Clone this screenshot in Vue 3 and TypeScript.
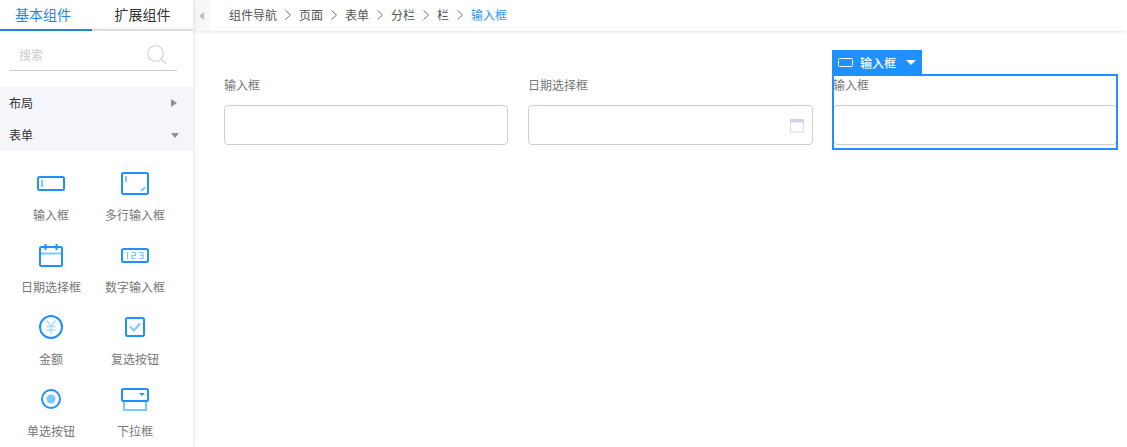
<script setup lang="ts">
const crumbs: string[] = ['组件导航', '页面', '表单', '分栏', '栏']
const items: { label: string; icon: string }[] = [
  { label: '输入框', icon: 'input' },
  { label: '多行输入框', icon: 'textarea' },
  { label: '日期选择框', icon: 'date' },
  { label: '数字输入框', icon: 'number' },
  { label: '金额', icon: 'money' },
  { label: '复选按钮', icon: 'check' },
  { label: '单选按钮', icon: 'radio' },
  { label: '下拉框', icon: 'select' },
]
</script>

<template>
  <div class="app">
    <aside class="side">
      <div class="tabs">
        <div class="tab on">基本组件</div>
        <div class="tab">扩展组件</div>
      </div>
      <div class="search">
        <span class="ph">搜索</span>
        <svg width="22" height="22" viewBox="0 0 22 22" fill="none" stroke="#cfcfcf" stroke-width="1.1">
          <circle cx="9.5" cy="9.5" r="7.8" />
          <path d="M15 15l5.5 5" />
        </svg>
      </div>
      <div class="group">
        <span>布局</span><i class="tri right"></i>
      </div>
      <div class="group">
        <span>表单</span><i class="tri down"></i>
      </div>
      <div class="grid">
        <div v-for="it in items" :key="it.label" class="item">
          <div class="ic">
            <svg width="30" height="30" viewBox="0 0 30 30" fill="none">
              <template v-if="it.icon === 'input'">
                <rect x="2" y="7" width="26" height="13" rx="1.5" stroke="#1e90ff" stroke-width="2" />
                <path d="M6 10v7" stroke="#7cc8ff" stroke-width="2" />
              </template>
              <template v-else-if="it.icon === 'textarea'">
                <rect x="2" y="3" width="26" height="21" rx="1.5" stroke="#1e90ff" stroke-width="2" />
                <path d="M6 6v6" stroke="#7cc8ff" stroke-width="2" />
                <path d="M21 21l4-3.500" stroke="#7cc8ff" stroke-width="2" />
              </template>
              <template v-else-if="it.icon === 'date'">
                <rect x="4" y="5" width="22" height="19" rx="1.500" stroke="#1e90ff" stroke-width="2" />
                <path d="M5 11.500h20" stroke="#7cc8ff" stroke-width="2" />
                <path d="M9.500 2v6M20.500 2v6" stroke="#1e90ff" stroke-width="2" />
              </template>
              <template v-else-if="it.icon === 'number'">
                <rect x="2" y="7" width="26" height="13" rx="1.500" stroke="#1e90ff" stroke-width="2" />
                <path d="M7.500 10v7M12 10.500h3.500V13.500H12V16.500h3.500M19 10.500h4v6h-4M20 13.500h3" stroke="#7cc8ff" stroke-width="1.200" />
              </template>
              <template v-else-if="it.icon === 'money'">
                <circle cx="15" cy="13" r="11" stroke="#1e90ff" stroke-width="2" />
                <path d="M10.500 6.500L15 12l4.500-5.500M15 12v8M10.500 12.500h9M10.500 16h9" stroke="#a6dcff" stroke-width="1.400" />
              </template>
              <template v-else-if="it.icon === 'check'">
                <rect x="6" y="4" width="18" height="18" rx="1.500" stroke="#1e90ff" stroke-width="2" />
                <path d="M10 12.500l4 4 6-7" stroke="#7cc8ff" stroke-width="2" />
              </template>
              <template v-else-if="it.icon === 'radio'">
                <circle cx="15" cy="13" r="9" stroke="#1e90ff" stroke-width="2" />
                <circle cx="15" cy="13" r="4.500" fill="#7cc8ff" />
              </template>
              <template v-else>
                <path d="M4 14v10h22V14" stroke="#7cc8ff" stroke-width="2" />
                <rect x="2" y="3" width="26" height="12" rx="1.500" stroke="#1e90ff" stroke-width="2" />
                <path d="M19 7h6l-3 3z" fill="#1e90ff" />
              </template>
            </svg>
          </div>
          <div class="lb">{{ it.label }}</div>
        </div>
      </div>
    </aside>
    <main class="main">
      <header class="top">
        <div class="toggle"><i class="tri left"></i></div>
        <nav class="crumbs">
          <template v-for="c in crumbs" :key="c">
            <span>{{ c }}</span>
            <svg class="sep" width="6" height="10" viewBox="0 0 6 10" fill="none" stroke="#777" stroke-width="1">
              <path d="M.5 .5L5.500 5 .5 9.500" />
            </svg>
          </template>
          <span class="cur">输入框</span>
        </nav>
      </header>
      <section class="form">
        <div class="col">
          <label>输入框</label>
          <div class="field"></div>
        </div>
        <div class="col">
          <label>日期选择框</label>
          <div class="field date">
            <svg width="14" height="15" viewBox="0 0 14 15" fill="none">
              <rect x=".5" y="2.500" width="13" height="11.500" stroke="#d3dcea" />
              <rect x="0" y="1" width="14" height="3.500" fill="#cbd5e5" />
            </svg>
          </div>
        </div>
        <div class="col sel">
          <div class="bar">
            <svg width="15" height="9" viewBox="0 0 15 9" fill="none" stroke="#fff" stroke-width="1">
              <rect x=".5" y=".5" width="14" height="8" rx="1" />
            </svg>
            <span>输入框</span>
            <i class="tri wd"></i>
          </div>
          <div class="box">
            <label>输入框</label>
            <div class="field"></div>
          </div>
        </div>
      </section>
    </main>
  </div>
</template>

<style>
html, body { margin: 0; padding: 0; background: #fff; overflow: hidden; }
</style>

<style scoped>
.app {
  display: flex;
  width: 1127px;
  height: 447px;
  overflow: hidden;
  font-family: "Noto Sans CJK SC", "Liberation Sans", sans-serif;
  font-size: 12px;
  color: #666;
}
.side {
  width: 193px;
  flex: none;
  background: #fff;
  box-shadow: 1px 0 4px rgba(0, 0, 0, .1);
  position: relative;
  z-index: 2;
}
.tabs { display: flex; height: 31px; }
.tab {
  flex: 1;
  text-align: center;
  font-size: 14px;
  line-height: 28px;
  height: 29px;
  color: #333;
  border-bottom: 2px solid #ddd;
}
.tab.on { flex: none; width: 86px; padding-right: 6px; color: #1e88e5; border-bottom-color: #1e88e5; }
.search {
  margin: 9px 16px 0 9px;
  height: 30px;
  border-bottom: 1px solid #ccc;
  display: flex;
  align-items: center;
  justify-content: space-between;
  padding: 0 9px 0 10px;
}
.ph { color: #ccc; margin-top: -2px; }
.group {
  height: 30px;
  padding: 0 14px 2px 9px;
  background: #f5f6fa;
  color: #333;
  display: flex;
  align-items: center;
  justify-content: space-between;
}
.search + .group { margin-top: 16px; }
.tri { display: block; width: 0; height: 0; border-style: solid; border-color: transparent; }
.tri.right { border-width: 4.500px 0 4.500px 6px; border-left-color: #8a93a6; margin-right: 2px; margin-top: 2px; }
.tri.down { border-width: 5px 4px 0 4px; border-top-color: #8a93a6; margin-top: 2px; }
.tri.left { border-width: 4.500px 5px 4.500px 0; border-right-color: #bbb; }
.tri.wd { border-width: 5.500px 5px 0 5px; border-top-color: #fff; margin-left: 10px; }
.grid {
  display: grid;
  grid-template-columns: 86px 82px;
  grid-auto-rows: 72px;
  padding: 19px 0 0 8px;
}
.item { display: flex; flex-direction: column; align-items: center; }
.ic { height: 30px; }
.lb { margin-top: 6px; line-height: 18px; color: #777; white-space: nowrap; }
.main { flex: 1; min-width: 0; }
.top {
  height: 31px;
  display: flex;
  box-shadow: 0 1px 3px rgba(0, 0, 0, .1);
  background: #fff;
}
.toggle {
  width: 17px;
  background: #f7f7f7;
  display: flex;
  align-items: center;
  padding-left: 6px;
  box-sizing: border-box;
}
.crumbs {
  display: flex;
  align-items: center;
  gap: 8px;
  margin-left: 19px;
  color: #555;
  height: 29px;
}
.sep { margin-top: 1px; }
.cur { color: #2f94f0; }
.form {
  display: flex;
  padding: 45px 9px 0 31px;
}
.col { width: 284px; flex: none; }
.col + .col { width: 285px; margin-left: 20px; }
.col.sel { margin-left: 19px; }
label { display: block; line-height: 18px; height: 18px; color: #777; }
.field {
  height: 38px;
  margin-top: 11px;
  border: 1px solid #ccced6;
  border-radius: 4px;
  background: #fff;
  display: flex;
  align-items: center;
  justify-content: flex-end;
  padding-right: 8px;
}
.sel { position: relative; }
.bar {
  position: absolute;
  left: 0;
  top: -26px;
  height: 24px;
  width: 90px;
  background: #1e90ff;
  color: #fff;
  display: flex;
  align-items: center;
  padding-left: 6px;
  box-sizing: border-box;
  font-weight: 500;
}
.bar span { margin-left: 7px; }
.box {
  border: 2px solid #1e90ff;
  box-sizing: border-box;
  height: 76px;
  margin-top: -2px;
  width: 286px;
  overflow: hidden;
}
.box label { margin: 0 0 0 -1px; height: 18px; line-height: 17px; }
.box .field { margin: 11px -1px 0; padding-right: 0; height: 38px; }
</style>
